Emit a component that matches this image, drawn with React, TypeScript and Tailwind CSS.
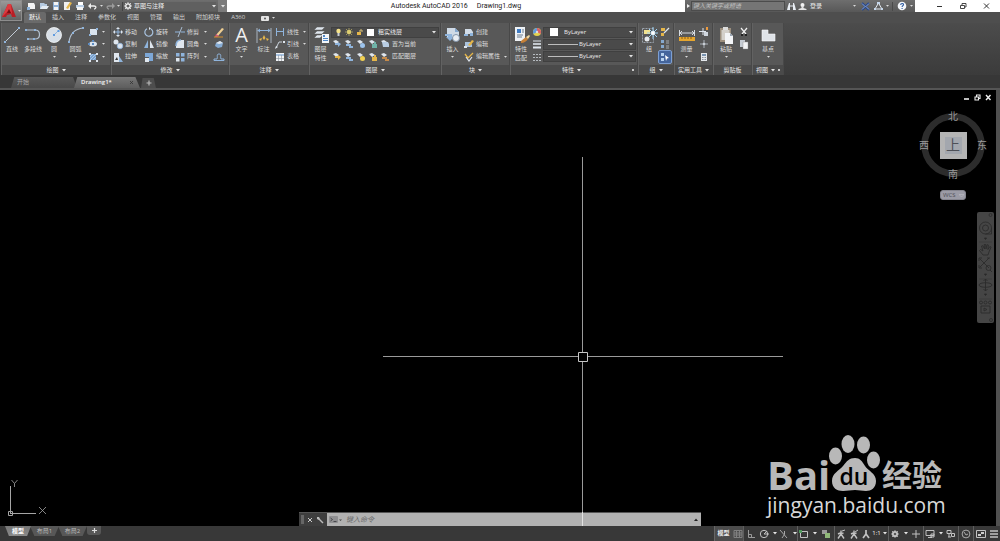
import React from "react";

type Kids = { children?: React.ReactNode };

const B = "#8fb4dc";
const L = "#dfe6ee";
const Y = "#e5b64a";

function Ico({ s = 12, w, children }: Kids & { s?: number; w?: number }) {
  return (
    <svg width={w ?? s} height={s} viewBox={`0 0 ${w ?? s} ${s}`} fill="none" className="shrink-0" aria-hidden="true">
      {children}
    </svg>
  );
}

function Caret({ className = "" }: { className?: string }) {
  return (
    <svg width="4" height="3" viewBox="0 0 4 3" className={`shrink-0 ${className}`} aria-hidden="true">
      <path d="M0 0h4L2 2.6z" fill="#e4e4e4" />
    </svg>
  );
}

function Dot() {
  return (
    <svg width="3" height="2" viewBox="0 0 3 2" className="shrink-0" aria-hidden="true">
      <path d="M0 0h3L1.5 1.8z" fill="#dcdcdc" />
    </svg>
  );
}

/* ---------- large ribbon icons (18 x 18) ---------- */
const big = {
  line: (
    <Ico s={18}>
      <path d="M2 16L16 2" stroke="#c3cbd4" />
      <path d="M1 15h2v2H1zM15 1h2v2h-2z" fill={B} />
    </Ico>
  ),
  pline: (
    <Ico s={18}>
      <path d="M2 4h9c6 0 6 9 0 9H4" stroke="#b4c2d1" strokeWidth="1.2" />
      <path d="M1 3h2v2H1zM10 3h2v2h-2zM3 12h2v2H3zM9 12h2v2H9z" fill={B} />
    </Ico>
  ),
  circle: (
    <Ico s={18}>
      <circle cx="9" cy="9" r="7.5" fill="#d8dfe7" stroke="#f4f6f8" strokeWidth=".8" />
      <path d="M9 9l4-4" stroke={B} />
      <path d="M8 8h2v2H8zM12.500 4h2v2h-2z" fill="#5f9be0" />
    </Ico>
  ),
  arc: (
    <Ico s={18}>
      <path d="M2 16C3 8 8 3 16 2" stroke="#b4c2d1" strokeWidth="1.2" />
      <path d="M1 15h2v2H1zM5 6h2v2H5zM15 1h2v2h-2z" fill={B} />
    </Ico>
  ),
  dim: (
    <Ico s={18}>
      <path d="M2 2v15M16 2v15" stroke="#a9b4c0" />
      <path d="M2.500 4.500h13M5 3L3 4.500 5 6M13 3l2 1.500L13 6" stroke={B} />
      <path d="M9 9l1.500 3L9 14l-1.500-2zM4 13l3-1-1 3zM14 13l-3-1 1 3z" fill={Y} />
    </Ico>
  ),
  layer: (
    <Ico s={18}>
      <path d="M5 1h8l-3 3H2zM5 5h8l-3 3H2zM5 9h6l-3 3H2z" fill={L} stroke="#555" strokeWidth=".5" />
      <path d="M10 8h7v9h-7z" fill="#f3f5f8" />
      <path d="M11 9h2v2h-2zM11 12h5v1h-5zM11 14h5v1h-5z" fill="#4f86c6" />
    </Ico>
  ),
  insert: (
    <Ico s={18}>
      <path d="M3 2h8l4 4v5H3z" fill="#cfdae6" />
      <path d="M11 2v4h4z" fill="#86a9cf" />
      <path d="M1 8h7v3h2l-4 4-4-4h2v-1H1z" fill={B} />
      <circle cx="12" cy="12" r="3.500" fill="#e9edf2" stroke="#8194aa" />
    </Ico>
  ),
  match: (
    <Ico s={18}>
      <path d="M3 1h10v14H3z" fill="#eef2f6" />
      <path d="M5 3h4v4H5z" fill="#3f7cc4" />
      <path d="M10 4h2M10 6h2M5 9h6M5 11h5" stroke="#6a7a8c" />
      <path d="M9 15l5-4 2 2c-1 2-4 4-7 4z" fill="#c58037" />
      <path d="M14 11l3-2 1 1-2 3z" fill="#efd7a0" />
    </Ico>
  ),
  group: (
    <Ico s={18}>
      <path d="M2.500 2.500h11v14h-11z" stroke="#9aa3ad" strokeDasharray="2 1" />
      <path d="M4 4h6v4H4z" fill="#f1e28f" />
      <circle cx="7" cy="13" r="2.500" fill="#e7ebef" />
      <path d="M13 1v12M7 7h11M9 3l8 8M17 3l-8 8" stroke="#9ed3f5" />
      <circle cx="13" cy="7" r="2" fill="#fff" />
    </Ico>
  ),
  measure: (
    <Ico s={18}>
      <path d="M1.500 4v6M16.500 4v6M2 7h14" stroke="#d5dae0" />
      <path d="M4 5L2 7l2 2M14 5l2 2-2 2" stroke="#d5dae0" />
      <path d="M1 11h16v4H1z" fill="#e6a62f" />
      <path d="M4 11v2M7 11v2M10 11v2M13 11v2" stroke="#8a5d10" />
    </Ico>
  ),
  paste: (
    <Ico s={18}>
      <path d="M3 2h11v14H3z" fill="#9c8f7e" />
      <path d="M6 1h5v3H6z" fill="#dcdcdc" />
      <path d="M4.500 4h8v10h-8z" fill="#d4d0ca" />
      <path d="M8 7h5l3 3v8H8z" fill="#f4f5f7" />
      <path d="M13 7v3h3z" fill="#9aa6b4" />
    </Ico>
  ),
  base: (
    <Ico s={18}>
      <path d="M3 4h6v4h7v7H3z" fill="#dfe3e8" stroke="#f6f7f8" strokeWidth=".6" />
    </Ico>
  ),
};

/* ---------- small ribbon icons (12 x 12) ---------- */
const sm = {
  rect: <Ico><path d="M3 3h7v6H3z" fill="#dbe4ee" /><path d="M2 8h2v2H2zM9 2h2v2H9z" fill={B} /></Ico>,
  ellipse: <Ico><ellipse cx="6" cy="6" rx="4" ry="2.500" fill="#dbe4ee" /><path d="M5 2h2v2H5zM1 5h2v2H1zM5 5h2v2H5z" fill="#5d8cc2" /></Ico>,
  hatch: <Ico><path d="M3 3h6v6H3z" fill="#7ba2cf" /><path d="M3 6l3-3M3 9l6-6M6 9l3-3" stroke="#a9c8e8" /><path d="M2 2h2v2H2zM9 2h2v2H9zM2 9h2v2H2zM9 9h2v2H9z" fill={L} /></Ico>,
  move: <Ico><path d="M6 1l2 2H4zM6 11L4 9h4zM1 6l2-2v4zM11 6L9 8V4z" fill={L} /><path d="M6 3v6M3 6h6" stroke={B} /></Ico>,
  rotate: <Ico><path d="M4 2.700a4 4 0 1 0 4 .2" stroke="#a8c3e0" strokeWidth="1.200" /><path d="M6 1v3l2-1.500z" fill={L} /></Ico>,
  trim: <Ico><path d="M1 6h10" stroke={B} strokeDasharray="5 1" /><path d="M4 11L8 1" stroke="#a8bcd2" /></Ico>,
  erase: <Ico><path d="M3 9l6-7 2 1-6 7z" fill="#f0cf92" /><path d="M3 8l3 2-2 1H2z" fill="#d0567b" /><path d="M1 11h9" stroke="#d68e2a" /></Ico>,
  copy: <Ico><circle cx="4" cy="4" r="2.500" fill={L} /><circle cx="8" cy="8" r="2.800" fill="#dbe4ee" stroke={B} strokeWidth=".8" /></Ico>,
  mirror: <Ico><path d="M5 2v8H1z" fill={B} /><path d="M7 2v8h4z" fill={L} /></Ico>,
  fillet: <Ico><path d="M2 10V8c0-4 2-6 5-6h3v8z" fill={L} /><path d="M2 8c0-4 2-6 5-6" stroke={B} strokeWidth="1.500" /></Ico>,
  explode: <Ico><path d="M3 5l4-2 3 2-1 4-4 1-3-2z" fill="#86abd3" /><path d="M3 5l4-2 3 2-4 1z" fill={L} /></Ico>,
  stretch: <Ico><path d="M2 2h5v9H2z" fill={L} /><path d="M7 5l4 6H7z" fill={B} /><path d="M5 6l1 3H3z" fill="#333" /></Ico>,
  scale: <Ico><path d="M2 2h8v8H6V6H2z" fill="#7da8d8" /><path d="M2 7h4v4H2z" fill={L} /></Ico>,
  array: <Ico><path d="M2 2h3.500v3.500H2zM7 2h3.500v3.500H7zM7 7h3.500v3.500H7z" fill={B} /><path d="M2 7h3.500v3.500H2z" fill={L} /></Ico>,
  offset: <Ico><path d="M1 9.500h10V8H8c-1-2 1-5-2-5S5 6 4 8H1z" stroke={B} /></Ico>,
  linear: <Ico><path d="M2.500 2v8M9.500 2v8M3 5.500h6" stroke={B} /></Ico>,
  leader: <Ico><path d="M2 10l3-6h3" stroke="#c7d0da" /><path d="M1 11l1-3 2 1z" fill={L} /><path d="M9 3h2v2H9z" fill={L} /></Ico>,
  table: <Ico><path d="M2 2h8v8H2z" fill="#f1f3f5" /><path d="M2 4h8" stroke={B} strokeWidth="1.500" /><path d="M2 7.500h8M4.500 4v6M7.500 4v6" stroke="#89939e" strokeWidth=".6" /></Ico>,
  create: <Ico><path d="M2 3h6l2 3v2H2z" fill="#d2dce7" /><path d="M1 8h4v2H1zM7 7h3v3H7z" fill={B} /></Ico>,
  editBlock: <Ico><path d="M2 4h5l2 3v2H2z" fill="#a9c2dd" /><path d="M5 7l4-5 2 1-4 5z" fill={Y} /><path d="M1 8h3v2H1z" fill={L} /></Ico>,
  editAttr: <Ico><path d="M2 3l3 4 5-5" stroke={Y} strokeWidth="1.300" /><path d="M3 6l3 4 3-4" stroke={L} strokeWidth="1.200" /></Ico>,
  wheel: <Ico><circle cx="6" cy="6" r="4" fill="#e3d24d" /><path d="M6 6V2a4 4 0 0 0-3.500 6z" fill="#5f9be0" /><path d="M6 6V2a4 4 0 0 1 3.500 6z" fill="#d8606a" /><circle cx="6" cy="6" r="1.200" fill="#ddd" /></Ico>,
  lw: <Ico><path d="M2 3h8" stroke={L} /><path d="M2 6h8" stroke={L} strokeWidth="1.600" /><path d="M2 9.500h8" stroke={L} strokeWidth="2" /></Ico>,
  lt: <Ico><path d="M2 3.500h8M2 6.500h8M2 9.500h8" stroke="#b5babf" strokeDasharray="2 1" /></Ico>,
  gEdit: <Ico><path d="M2 2h4v3H2zM2 7h3v3H2z" fill={Y} /><path d="M5 7l5-5" stroke={L} strokeWidth="1.300" /></Ico>,
  gList: <Ico><path d="M2 2h3v3H2zM2 7h3v3H2z" fill="#86a9cf" /><path d="M7 3h3M7 5h3M7 8h3M7 10h3" stroke="#b8bec5" strokeWidth=".8" /></Ico>,
  gSel: <Ico><path d="M2 2h3v3H2zM2 7h3v3H2z" fill="#b4d0ee" /><path d="M6 4l4 3-2 .5L7 10z" fill="#fff" /></Ico>,
  idp: <Ico><path d="M5 2v7M1 5.500h7" stroke={L} /><path d="M6 6h4v4H6z" fill="#cfd6de" /><path d="M8 1h2v3H8z" fill="#ed9a3c" /></Ico>,
  pt: <Ico><path d="M6 2v8M2 6h8" stroke="#a9b0b8" /><circle cx="6" cy="6" r="1.300" fill="#c9ced4" /></Ico>,
  calc: <Ico><path d="M3 2h6v8H3z" fill="#e5e8ec" /><path d="M4 3h4v2H4z" fill="#7893b0" /><path d="M4 6.500h4M4 8.500h4" stroke="#86909b" strokeDasharray="1 .5" /></Ico>,
  cut: <Ico><path d="M3 2l5 6M9 2L4 8" stroke="#f0f0f0" strokeWidth="1.200" /><path d="M3 8h2v2H3zM7 8h2v2H7z" fill="#222" /></Ico>,
  copyClip: <Ico><path d="M2 2h5v7H2z" fill="#c7cdd4" /><path d="M5 4h5v7H5z" fill="#f3f4f5" stroke="#888" strokeWidth=".4" /></Ico>,
};

function layerIco(accent: string, variant: number) {
  return (
    <Ico>
      <path d="M2 3l3-1 3 2-3 2z" fill={L} />
      {variant === 0 && <path d="M4 5h4v2H4zM7 4l3 2-3 3z" fill={accent} />}
      {variant === 1 && <path d="M3 6h5v2H3zM6 8h4v2H6z" fill={accent} />}
      {variant === 2 && <circle cx="7.500" cy="7.500" r="2.500" fill={accent} />}
      {variant === 3 && <path d="M5 6h5v4H5zM7 4h2v2H7z" fill={accent} />}
      {variant === 4 && <path d="M3 4h6l1 2v3H4z" fill={accent} />}
    </Ico>
  );
}

/* ---------- ribbon building blocks ---------- */
function Panel({ title, caret = true, launcher = false, className, children }: Kids & { title: string; caret?: boolean; launcher?: boolean; className: string }) {
  return (
    <section className={`flex shrink-0 flex-col border-r border-[#484848] border-l border-l-[#626262] ${className}`}>
      <div className="flex h-[42px] bg-[#585858] pt-[3px]">{children}</div>
      <div className="flex h-[10px] items-center bg-[#4a4a4a] text-[#e6e6e6]">
        <button className="flex flex-1 items-center justify-center gap-[3px] leading-[9px] whitespace-nowrap">
          {title}
          {caret && <Caret />}
        </button>
        {launcher && <span className="mr-[3px] size-[2px] shrink-0 bg-[#c9c9c9]" />}
      </div>
    </section>
  );
}

function Big({ icon, lines, caret = false, className }: { icon: React.ReactNode; lines: string[]; caret?: boolean; className: string }) {
  return (
    <button className={`flex h-[38px] shrink-0 flex-col items-center ${className}`}>
      <span className="flex h-[19px] items-start">{icon}</span>
      {lines.map((t) => (
        <span key={t} className="leading-[9px] whitespace-nowrap">{t}</span>
      ))}
      {caret && <span className="mt-[2px]"><Dot /></span>}
    </button>
  );
}

function Row({ icon, label, caret = false, active = false, name }: { icon: React.ReactNode; label?: string; caret?: boolean; active?: boolean; name?: string }) {
  return (
    <button
      aria-label={label ?? name}
      className={active ? "flex items-center rounded-[1px] bg-[#44659c] outline outline-[#7d9fd2]" : "flex items-center gap-[1px] whitespace-nowrap"}
    >
      {icon}
      {label}
      {caret && <span className="ml-auto"><Dot /></span>}
    </button>
  );
}

function Col({ className = "", children }: Kids & { className?: string }) {
  return <div className={`grid h-[37px] shrink-0 grid-rows-3 ${className}`}>{children}</div>;
}

function Combo({ label, value, children }: Kids & { label: string; value: string }) {
  return (
    <div className="flex h-[11px] items-center gap-1 self-center border border-[#404040] bg-[#4a4a4a] px-1">
      {children}
      <select aria-label={label} className="min-w-0 flex-1 appearance-none bg-transparent leading-[9px] text-[#ececec] outline-none">
        <option>{value}</option>
      </select>
      <Caret className="-mr-[2px]" />
    </div>
  );
}

function Ribbon() {
  const menu = ["默认", "插入", "注释", "参数化", "视图", "管理", "输出", "附加模块", "A360"];
  return (
    <>
      <nav className="flex h-[11px] items-stretch gap-px bg-[#4e4e4e] pl-[24px] text-[#d2d2d2]">
        {menu.map((m, i) => (
          <a
            key={m}
            href="#"
            className={i === 0 ? "flex items-center rounded-t-[2px] bg-[#6a6a6a] px-[5px] leading-[9px] text-white" : "flex items-center px-[5px] leading-[9px] whitespace-nowrap"}
          >
            {m}
          </a>
        ))}
        <button aria-label="显示选项" className="ml-2.5 flex items-center gap-[3px]">
          <Ico s={8}><rect x="0" y="2" width="8" height="5" rx="1" fill="#e4e4e4" /><circle cx="4" cy="4.500" r="1" fill="#555" /></Ico>
          <Dot />
        </button>
      </nav>
      <div className="flex h-[52px] bg-linear-to-b from-[#4c4c4c] to-[#3b3b3b] pl-[1px] text-[#dedede]">
        <Panel title="绘图" className="w-[110px]">
          <Big icon={big.line} lines={["直线"]} className="w-[20px]" />
          <Big icon={big.pline} lines={["多段线"]} className="w-[22px]" />
          <Big icon={big.circle} lines={["圆"]} caret className="w-[20px]" />
          <Big icon={big.arc} lines={["圆弧"]} caret className="w-[23px]" />
          <Col className="w-[18px]">
            <Row icon={sm.rect} name="矩形" caret />
            <Row icon={sm.ellipse} name="椭圆" caret />
            <Row icon={sm.hatch} name="图案填充" caret />
          </Col>
        </Panel>
        <Panel title="修改" className="w-[118px]">
          <Col className="w-[31px]">
            <Row icon={sm.move} label="移动" />
            <Row icon={sm.copy} label="复制" />
            <Row icon={sm.stretch} label="拉伸" />
          </Col>
          <Col className="w-[31px]">
            <Row icon={sm.rotate} label="旋转" />
            <Row icon={sm.mirror} label="镜像" />
            <Row icon={sm.scale} label="缩放" />
          </Col>
          <Col className="mr-[6px] w-[33px]">
            <Row icon={sm.trim} label="修剪" caret />
            <Row icon={sm.fillet} label="圆角" caret />
            <Row icon={sm.array} label="阵列" caret />
          </Col>
          <Col>
            <Row icon={sm.erase} name="删除" />
            <Row icon={sm.explode} name="分解" />
            <Row icon={sm.offset} name="偏移" />
          </Col>
        </Panel>
        <Panel title="注释" className="w-[80px]">
          <Big icon={<span className="text-[20px] leading-[17px] text-[#f0f0f0]">A</span>} lines={["文字"]} caret className="w-[23px]" />
          <Big icon={big.dim} lines={["标注"]} className="w-[21px]" />
          <Col className="w-[32px]">
            <Row icon={sm.linear} label="线性" caret />
            <Row icon={sm.leader} label="引线" caret />
            <Row icon={sm.table} label="表格" />
          </Col>
        </Panel>
        <Panel title="图层" className="w-[132px]">
          <Big icon={big.layer} lines={["图层", "特性"]} className="w-[21px]" />
          <Col className="w-[108px]">
            <Combo label="图层" value="粗实线层">
              <Ico s={8} w={5}><circle cx="2.500" cy="3" r="2.200" fill="#f6e38a" /><path d="M1.500 5h2v3h-2z" fill="#c8cdd2" /></Ico>
              <Ico s={8}><circle cx="4" cy="4" r="2" fill="#f4e27c" /><path d="M4 0v8M0 4h8M1 1l6 6M7 1L1 7" stroke="#d9c96b" strokeWidth=".6" /></Ico>
              <Ico s={8} w={6}><path d="M0 4h4v3H0z" fill={Y} /><path d="M3 4V2h2v2" stroke="#d9c27c" /></Ico>
              <span className="size-[7px] shrink-0 bg-white" />
            </Combo>
            <div className="flex items-center">
              {layerIco(B, 0)}{layerIco(B, 1)}{layerIco("#9cc3ec", 2)}{layerIco("#6fb3a8", 3)}
              <Row icon={layerIco("#b9cde3", 4)} label="置为当前" />
            </div>
            <div className="flex items-center">
              {layerIco(Y, 0)}{layerIco(B, 1)}{layerIco("#f0d052", 2)}{layerIco(Y, 3)}
              <Row icon={layerIco("#c58a4a", 1)} label="匹配图层" />
            </div>
          </Col>
        </Panel>
        <Panel title="块" className="w-[69px]">
          <Big icon={big.insert} lines={["插入"]} caret className="w-[21px]" />
          <Col className="w-[44px]">
            <Row icon={sm.create} label="创建" />
            <Row icon={sm.editBlock} label="编辑" />
            <Row icon={sm.editAttr} label="编辑属性" caret />
          </Col>
        </Panel>
        <Panel title="特性" launcher className="w-[128px]">
          <Big icon={big.match} lines={["特性", "匹配"]} className="w-[20px]" />
          <Col className="w-[12px]">
            <Row icon={sm.wheel} name="颜色" />
            <Row icon={sm.lw} name="线宽" />
            <Row icon={sm.lt} name="线型" />
          </Col>
          <Col className="w-[93px]">
            <Combo label="对象颜色" value="ByLayer">
              <span className="mr-[2px] ml-[2px] size-[8px] shrink-0 bg-white" />
            </Combo>
            <Combo label="线宽" value="ByLayer"><span className="-mr-[3px] h-px w-[30px] bg-[#bdbdbd]" /></Combo>
            <Combo label="线型" value="ByLayer"><span className="-mr-[3px] h-px w-[30px] bg-[#bdbdbd]" /></Combo>
          </Col>
        </Panel>
        <Panel title="组" className="w-[36px]">
          <Big icon={big.group} lines={["组"]} className="w-[20px]" />
          <Col>
            <Row icon={sm.gEdit} name="组编辑" />
            <Row icon={sm.gList} name="解除编组" />
            <Row icon={sm.gSel} name="启用组选择" active />
          </Col>
        </Panel>
        <Panel title="实用工具" className="w-[39px]">
          <Big icon={big.measure} lines={["测量"]} caret className="w-[23px]" />
          <Col>
            <Row icon={sm.idp} name="点坐标" />
            <Row icon={sm.pt} name="点样式" />
            <Row icon={sm.calc} name="计算器" />
          </Col>
        </Panel>
        <Panel title="剪贴板" caret={false} className="w-[39px]">
          <Big icon={big.paste} lines={["粘贴"]} caret className="w-[24px]" />
          <Col>
            <Row icon={sm.cut} name="剪切" />
            <Row icon={sm.copyClip} name="复制剪裁" />
          </Col>
        </Panel>
        <Panel title="视图" launcher className="w-[32px]">
          <Big icon={big.base} lines={["基点"]} caret className="w-full" />
        </Panel>
      </div>
    </>
  );
}

function TitleBar() {
  return (
    <header className="flex h-[12px] items-stretch bg-white text-[#ededed]">
      <div className="flex w-[227px] shrink-0 items-center bg-linear-to-b from-[#6e6e6e] to-[#585858] pl-[24px]">
        <button aria-label="新建" className="flex w-[13px] justify-center"><Ico s={10}><path d="M2 2h6l1 2v4H2z" fill="#f3f3f3" /><path d="M1 6h3v3H1z" fill={B} /></Ico></button>
        <button aria-label="打开" className="flex w-[13px] justify-center"><Ico s={10}><path d="M1 2h4l1 1h2v5H1z" fill="#b4c9e0" /><path d="M3 5h7L8 8H1z" fill="#e4ecf4" /></Ico></button>
        <button aria-label="保存" className="flex w-[12px] justify-center"><Ico s={10}><path d="M2 1h6v8H2z" fill="#8fb0d6" /><path d="M3 1h4v3H3zM3 6h4v3H3z" fill="#f4f4f4" /></Ico></button>
        <button aria-label="另存为" className="flex w-[12px] justify-center"><Ico s={10}><path d="M1 1h6v8H1z" fill="#f0f0f0" /><path d="M3 7l4-6 2 1-4 6z" fill={Y} /></Ico></button>
        <button aria-label="打印" className="flex w-[12px] justify-center"><Ico s={10}><path d="M3 1h5v3H3z" fill="#fff" /><path d="M1 4h8v3H1z" fill="#b8cde4" /><path d="M2 6h6v3H2z" fill="#f4f4f4" /></Ico></button>
        <button aria-label="放弃" className="flex w-[18px] items-center justify-center gap-[3px]"><Ico s={9}><path d="M2 4h4c3 0 2 3 0 3" stroke="#eee" strokeWidth="1.300" /><path d="M0 4l3-3v6z" fill="#eee" /></Ico><Dot /></button>
        <button aria-label="重做" className="mr-px flex w-[17px] items-center justify-center gap-[2px]"><Ico s={9}><path d="M7 4H3C0 4 1 7 3 7" stroke="#9b9b9b" strokeWidth="1.300" /><path d="M9 4L6 1v6z" fill="#9b9b9b" /></Ico><Dot /></button>
        <label className="flex flex-1 items-center gap-[2px] border-l border-[#444] bg-[#606060] pl-px">
          <Ico s={8}><circle cx="4" cy="4" r="2.200" stroke="#f2f2f2" strokeWidth="1.300" /><path d="M4 0v8M0 4h8M1 1l6 6M7 1L1 7" stroke="#f2f2f2" strokeWidth=".8" /><circle cx="4" cy="4" r="1.300" fill="#606060" /></Ico>
          <select aria-label="工作空间" className="min-w-0 flex-1 appearance-none bg-transparent leading-[9px] outline-none"><option>草图与注释</option></select>
          <Caret />
        </label>
        <button aria-label="自定义快速访问工具栏" className="ml-[2px] flex h-full w-[9px] items-center justify-center bg-[#7b7b7b]"><Caret /></button>
      </div>
      <h1 className="flex flex-1 items-center justify-center gap-[9px] font-['Roboto','Open_Sans',sans-serif] text-[7px] leading-[10px] whitespace-pre text-[#222]">
        <span>Autodesk AutoCAD 2016</span>
        <span>Drawing1.dwg</span>
      </h1>
      <div className="flex w-[230px] shrink-0 items-center bg-linear-to-b from-[#6e6e6e] to-[#585858]">
        <Ico s={6}><path d="M2 1l3 2-3 2z" fill="#eee" /></Ico>
        <input aria-label="搜索" placeholder="键入关键字或短语" className="h-[10px] w-[94px] border border-[#4c4c4c] bg-[#757575] px-px leading-[8px] italic outline-none placeholder:text-[#c2c2c2]" />
        <button aria-label="查找" className="flex w-[13px] justify-center"><Ico s={9}><path d="M1 4l1-3h1v7H0zM8 4L7 1H6v7h3z" fill="#e9eef4" /><path d="M3 4h3" stroke="#e9eef4" /></Ico></button>
        <button className="flex items-center gap-[3px] leading-[9px]"><Ico s={9}><circle cx="4.500" cy="3" r="2" fill="#f2f2f2" /><path d="M3.500 4h2v2l3 1v1h-8V7l3-1z" fill="#e4e4e4" /></Ico>登录</button>
        <span className="mr-[5px] ml-auto"><Dot /></span>
        <Ico s={9}><path d="M1 1l7 7M8 1L1 8" stroke="#28468a" strokeWidth="2.200" /><path d="M1 1.500l3 3-3 3M8 1.500l-3 3 3 3" stroke="#bcd0ec" strokeWidth=".7" /></Ico>
        <span className="ml-[4px] flex items-center gap-[3px]"><Ico s={9}><path d="M4.500 1L8 7H1z" stroke="#e6ecf3" /><path d="M3 0h3v2H3zM0 6h2v2H0zM7 6h2v2H7z" fill="#c5d6ea" /></Ico><Dot /></span>
        <span className="mr-[4px] ml-[3px] h-[9px] w-px bg-[#4a4a4a]" />
        <Ico s={10}><circle cx="5" cy="5" r="4.300" fill="#f3f6fa" /><path d="M3.700 4c0-2 2.800-2 2.800-.3 0 1-1.400 1-1.400 2.200M5.100 7v1" stroke="#2c5aa0" strokeWidth="1.100" /></Ico>
        <span className="mr-[2px] ml-[3px]"><Dot /></span>
      </div>
      <div className="flex w-[85px] shrink-0 items-center pl-[20px]">
        <button aria-label="最小化" className="flex w-[24px] pl-px"><Ico s={8}><path d="M1 4.500h5" stroke="#333" /></Ico></button>
        <button aria-label="还原" className="flex w-[24px]"><Ico s={8}><path d="M1.500 3.500h4v3h-4zM3 3V1.500h4V5H6" stroke="#333" strokeWidth=".9" /></Ico></button>
        <button aria-label="关闭" className="flex"><Ico s={8}><path d="M1 1.500l5 5M6 1.500l-5 5" stroke="#333" /></Ico></button>
      </div>
    </header>
  );
}

function DocTabs() {
  return (
    <div className="flex h-[15px] items-end border-b-2 border-[#555] bg-[#373737] pl-[11px] text-[#a8a8a8]">
      <button className="flex h-[11px] w-[66px] items-center bg-linear-to-b from-[#585858] to-[#484848] pl-[6px] leading-[9px] [clip-path:polygon(5%_0,94%_0,100%_100%,0_100%)]">开始</button>
      <button className="-ml-[3px] flex h-[11px] w-[66px] items-center bg-linear-to-b from-[#777] to-[#5e5e5e] pr-[6px] pl-[7px] leading-[9px] font-semibold text-[#f3f3f3] [clip-path:polygon(5%_0,93%_0,100%_100%,0_100%)]">
        Drawing1*
        <span className="ml-auto"><Ico s={5}><path d="M1 1l3 3M4 1L1 4" stroke="#333" strokeWidth=".8" /></Ico></span>
      </button>
      <button aria-label="新图形" className="ml-px flex h-[10px] w-[15px] items-center justify-center bg-[#4d4d4d] [clip-path:polygon(10%_0,85%_0,100%_100%,0_100%)]">
        <Ico s={6}><path d="M3 .5v5M.5 3h5" stroke="#b9b9b9" strokeWidth="1.200" /></Ico>
      </button>
    </div>
  );
}

function ViewCube() {
  return (
    <div className="absolute top-[20px] right-[8px] flex w-[70px] flex-col items-center text-[#9a9a9a]">
      <div className="relative grid h-[70px] w-[70px] grid-cols-[12px_1fr_12px] grid-rows-[12px_1fr_12px] place-items-center text-[10px] leading-[12px]">
        <svg className="absolute inset-0" width="70" height="70" viewBox="0 0 70 70" aria-hidden="true">
          <circle cx="35" cy="35" r="28.500" fill="none" stroke="#2c2c2c" strokeWidth="6.500" />
        </svg>
        <span className="relative col-start-2 row-start-1">北</span>
        <span className="relative col-start-1 row-start-2">西</span>
        <span className="relative col-start-3 row-start-2">东</span>
        <span className="relative col-start-2 row-start-3">南</span>
        <button className="relative col-start-2 row-start-2 flex size-[27px] items-center justify-center border-[5px] border-[#b4b4b4] bg-[#a3a7ae] text-[14px] leading-[16px] text-[#4e5057]">上</button>
      </div>
      <button className="mt-[10px] flex h-[10px] w-[26px] items-center gap-[3px] rounded-[3px] border border-[#85858f] bg-[#9b9ba6] pl-[2px] leading-[8px] text-[#505058]">
        WCS
        <Ico s={5}><path d="M0 1.500h5L2.500 4z" stroke="#b7b7c0" strokeWidth=".7" /></Ico>
      </button>
    </div>
  );
}

function NavBar() {
  return (
    <div className="absolute top-[122px] right-[2px] h-[111px] w-[17px] rounded-[2px] bg-[#454545]">
      <svg width="17" height="111" viewBox="0 0 17 111" fill="none" stroke="#2b2b2b" strokeWidth=".9" aria-hidden="true">
        <circle cx="13.500" cy="3" r="1.500" strokeWidth=".8" />
        <circle cx="8.500" cy="16" r="6" /><circle cx="8.500" cy="16" r="3" /><path d="M8.500 22h6v-6" />
        <path d="M7.500 26h2l-1 1.500zM7.500 62h2l-1 1.500zM7.500 82h2l-1 1.500z" fill="#292929" />
        <path d="M2 30h13M2 67h13M2 87h13" stroke="#3b3b3b" />
        <path d="M6 43l-3.500-4.500 1-1L6 39l-1.500-5 1.300-.4L7.500 37l-.3-4.500h1.500L9 37l1-4.300 1.300.3-.4 4.500 2-3 1.200.6-2.200 5L11 43z" />
        <path d="M3 47l9 9M12 46l-9 9M2 46h3M2 46v3M13 46h-3M2 56h3M2 56v-3" /><circle cx="11.500" cy="56" r="2.500" /><path d="M13 58l2 2" />
        <path d="M8.500 67v12M6.500 69l2-2 2 2M6.500 77l2 2 2-2M2 73c0-3 13-3 13 0s-13 3-13 0" />
        <circle cx="4" cy="90.500" r="1.500" /><circle cx="8.500" cy="90.500" r="1.500" /><circle cx="13" cy="90.500" r="1.500" />
        <path d="M4 94h9v7H4zM7 96v3l3-1.500z" /><circle cx="14" cy="108" r="1.500" strokeWidth=".8" />
      </svg>
    </div>
  );
}

function Watermark() {
  return (
    <div className="pointer-events-none absolute right-[49px] bottom-[7px] flex w-[180px] flex-col text-[#b8b8b8]">
      <div className="flex h-[57px] items-end font-bold">
        <span className="w-[59px] shrink-0 text-[40px] leading-[33px]">Bai</span>
        <span className="relative flex h-[57px] w-[52px] shrink-0 items-end justify-center">
          <svg className="absolute inset-0" width="56" height="57" viewBox="0 0 56 57" fill="#b8b8b8" aria-hidden="true">
            <ellipse cx="9.500" cy="22" rx="6.500" ry="8.500" />
            <ellipse cx="22" cy="10" rx="6.500" ry="9" />
            <ellipse cx="37.500" cy="11" rx="6.500" ry="8.500" />
            <ellipse cx="47.500" cy="26" rx="6.500" ry="8.500" />
            <path d="M29 24c5 0 7 3 10 8s11 7 11 15c0 7-5 10-10 10-4 0-7-1-11-1s-8 1-12 1C11 57 6 54 6 47c0-8 7-10 11-15 4-5 6-8 12-8z" />
          </svg>
          <span className="relative pb-[3px] pl-[4px] text-[23px] leading-[23px] font-semibold text-black">du</span>
        </span>
        <span className="ml-[4px] shrink-0 text-[30px] leading-[33px]">经验</span>
      </div>
      <div className="text-[21px] leading-[28px] whitespace-nowrap text-[#d8d8d8]">jingyan.baidu.com</div>
    </div>
  );
}

function Canvas() {
  return (
    <main className="relative flex-1 overflow-hidden border-r-4 border-[#505050] bg-black">
      <div className="absolute top-[4px] right-[4px] flex gap-[4px]">
        <button aria-label="最小化图形"><Ico s={7}><path d="M1 5h5" stroke="#eee" strokeWidth="1.600" /></Ico></button>
        <button aria-label="还原图形"><Ico s={7}><path d="M1 3h3.500v3H1zM2.500 3V1H6v3.500H5" stroke="#eee" strokeWidth="1.100" /></Ico></button>
        <button aria-label="关闭图形"><Ico s={7}><path d="M1 1l4.500 5M5.500 1L1 6" stroke="#eee" strokeWidth="1.400" /></Ico></button>
      </div>
      <ViewCube />
      <NavBar />
      <svg className="absolute bottom-[6px] left-[8px]" width="42" height="42" viewBox="0 0 42 42" fill="none" stroke="#a5a5a5" aria-hidden="true">
        <path d="M2.500 37V9M3 36.500h25M.5 34.500h4v4h-4z" transform="translate(0 -1)" />
        <path d="M31 29l7 7M38 29l-7 7" strokeWidth=".8" />
        <path d="M3.500 2l3 3.500 3-3.500M6.500 5.500V9" strokeWidth=".8" />
      </svg>
      <Watermark />
      <form className="absolute bottom-0 left-[calc(50%+2px)] flex h-[14px] w-[402px] -translate-x-1/2 border-t border-[#555] bg-[#3e3e3e]">
        <span className="my-[2px] ml-[2px] w-[3px] bg-[#666]" />
        <button type="button" aria-label="关闭命令行" className="flex w-[9px] items-center justify-end"><Ico s={6}><path d="M1 1l4 4M5 1L1 5" stroke="#ccc" /></Ico></button>
        <button type="button" aria-label="自定义" className="flex w-[14px] items-center justify-center"><Ico s={8}><path d="M3 3l4 4" stroke="#bbb" strokeWidth="1.500" /><path d="M1 1l2 0 1 2-1 1-2-1z" fill="#bbb" /></Ico></button>
        <div className="flex flex-1 items-center bg-[#b1b1b1] pr-[3px] pl-[2px]">
          <Ico s={9}><rect x="0" y="1" width="9" height="7" rx="1" fill="#8e8e90" /><path d="M1.500 3l2 1.500-2 1.500M4.500 6.500h3" stroke="#3f3f43" strokeWidth=".9" /></Ico>
          <Ico s={4}><path d="M1 1.500h3L2.500 3z" fill="#444" /></Ico>
          <input aria-label="命令" placeholder="键入命令" className="ml-1 min-w-0 flex-1 bg-transparent text-[7px] leading-[10px] italic outline-none placeholder:text-[#6c6c6c]" />
          <Ico s={4}><path d="M0 3h4L2 .5z" fill="#222" /></Ico>
        </div>
      </form>
      <svg className="pointer-events-none absolute top-[67px] left-[383px]" width="400" height="369" viewBox="0 0 400 369" fill="none" stroke="#9a9a9a" aria-hidden="true">
        <path d="M199.500 0v195M199.500 205v150M0 199.500h195M205 199.500h195" />
        <path d="M199.500 355v14" stroke="#e2e2e2" />
        <path d="M195.500 195.500h9v9h-9z" stroke="#c6c6c6" />
      </svg>
    </main>
  );
}

function Tool({ name, w, caret = false, className, children }: Kids & { name: string; w?: number; caret?: boolean; className: string }) {
  return (
    <button aria-label={name} className={`flex h-full shrink-0 items-center justify-center gap-[4px] ${className}`}>
      <svg width={w ?? 10} height="10" viewBox={`0 0 ${w ?? 10} 10`} fill="none" stroke="#c2c2c2" className="shrink-0" aria-hidden="true">{children}</svg>
      {caret && <Caret />}
    </button>
  );
}

const person = "M5 1.500v4M5 5L2 9.500M5 5l3 4.500M2 5l3-1.500 2.500 1";

function StatusBar() {
  const layouts = [
    ["模型", "z-10 w-[26px] bg-linear-to-b from-[#777] to-[#8a8a8a] font-bold text-white"],
    ["布局1", "w-[29px] bg-[#575757] text-[#bdbdbd]"],
    ["布局2", "w-[29px] bg-[#575757] text-[#bdbdbd]"],
  ];
  return (
    <footer className="flex h-[15px] items-start bg-[#383838] pl-[5px]">
      {layouts.map(([t, c]) => (
        <button key={t} className={`-mr-px flex h-[10px] items-center justify-center leading-[9px] [clip-path:polygon(0_0,100%_0,85%_100%,15%_100%)] ${c}`}>{t}</button>
      ))}
      <button aria-label="新建布局" className="ml-px flex h-[9px] w-[14px] items-center justify-center rounded-b-[3px] bg-[#575757]"><Ico s={5}><path d="M2.500 0v5M0 2.500h5" stroke="#ddd" strokeWidth="1.200" /></Ico></button>
      <div className="ml-auto flex h-full items-center border-l border-[#666] text-[#eee]">
        <button className="flex h-full w-[17px] items-center justify-center bg-[#4c4c4c] leading-[9px] font-bold">模型</button>
        <Tool name="栅格" className="w-[11px] bg-[#4c4c4c]"><path d="M1 1.500h8v7H1zM1 4h8M1 6h8M3.500 1v8M6.500 1v8" stroke="#808080" /></Tool>
        <Tool name="正交" className="w-[14px] border-l border-[#5e5e5e]"><path d="M2.500 1v7.500H9M2.500 5.500h3v3" stroke="#9a9a9a" /></Tool>
        <Tool name="极轴追踪" caret className="w-[21px]"><circle cx="5" cy="5" r="3.700" /><path d="M5 5h5M5 5l3-3" /></Tool>
        <Tool name="等轴测草图" caret className="w-[19px]"><path d="M1 1l7 8M5.500 2v3.500L3 9" stroke="#a6a6a6" /></Tool>
        <Tool name="对象捕捉" caret className="w-[21px] border-l border-[#5e5e5e]"><path d="M1.500 2.500h7v6h-7z" /><path d="M0 1h3v3H0z" fill="#4f9a5c" stroke="none" /></Tool>
        <Tool name="透明度" className="w-[16px]"><path d="M1 1h5v4H1z" fill="#9a9a9a" stroke="none" /><path d="M4 4h5v5H4z" fill="#8fb878" stroke="none" /></Tool>
        <Tool name="注释可见性" className="w-[13px] border-l border-[#5e5e5e]"><path d={person} strokeWidth="1.400" /><path d="M6 2l3-1" /></Tool>
        <Tool name="自动缩放" className="w-[13px]"><path d={person} strokeWidth="1.400" /><path d="M6 3l3-2" /></Tool>
        <Tool name="注释比例" className="w-[11px]"><path d="M5 1v4M5 5L2 9M5 5l3 4" strokeWidth="1.700" /></Tool>
        <button className="flex w-[17px] items-center justify-center gap-[2px] leading-[9px]">1:1<Caret /></button>
        <Tool name="切换工作空间" caret className="w-[21px] border-l border-[#5e5e5e]"><circle cx="5" cy="5" r="2.200" strokeWidth="1.800" /><path d="M5 1v8M1 5h8M2 2l6 6M8 2L2 8" strokeWidth=".8" /><circle cx="5" cy="5" r="1" fill="#383838" stroke="none" /></Tool>
        <Tool name="注释监视器" className="w-[14px]"><path d="M5 1v8M1 5h8" /></Tool>
        <Tool name="隔离对象" caret className="w-[21px] border-l border-[#5e5e5e]"><path d="M1 1.500h8v5H1zM3 8.500h4M6 5h3v3H6z" /></Tool>
        <Tool name="快捷特性" className="w-[14px]"><path d="M1 1.500h4v3H1zM5.500 4.500h3v3h-3zM2 8h3M3 5v3" /></Tool>
        <Tool name="硬件加速" className="w-[15px] border-l border-[#5e5e5e]"><circle cx="5" cy="5" r="3.900" stroke="#a9a9a9" /><path d="M3 3l2 3 2-1" stroke="#a9a9a9" /></Tool>
        <Tool name="全屏显示" className="w-[14px] border-l border-[#5e5e5e]"><path d="M.5 1.500h9v7h-9z" /><path d="M5 3h3v2H5zM2 5h3v2H2z" fill="#cdcdcd" stroke="none" /></Tool>
        <Tool name="自定义" className="w-[13px]"><path d="M1 2h8M1 5h8M1 8h8" strokeWidth="1.300" /></Tool>
      </div>
    </footer>
  );
}

export default function App() {
  return (
    <div className="relative flex h-screen flex-col overflow-hidden bg-[#383838] font-['Open_Sans','Noto_Sans_CJK_SC',sans-serif] text-[6px] leading-[9px]">
      <TitleBar />
      <button aria-label="应用程序菜单" className="absolute top-0 left-0 z-10 flex h-[21px] w-[22px] items-center justify-center gap-px border border-[#8d8d8d] bg-linear-to-b from-[#999] to-[#626262]">
        <Ico s={15}>
          <path d="M6 1h3l5 13h-4l-1-3-4 1-1 2H0z" fill="#b81f26" />
          <path d="M6 1h3l1 10-3-4-7 7z" fill="#dd3a3f" />
          <path d="M7 6l2 4H5z" fill="#7b0f14" />
        </Ico>
        <Dot />
      </button>
      <Ribbon />
      <DocTabs />
      <Canvas />
      <StatusBar />
    </div>
  );
}
